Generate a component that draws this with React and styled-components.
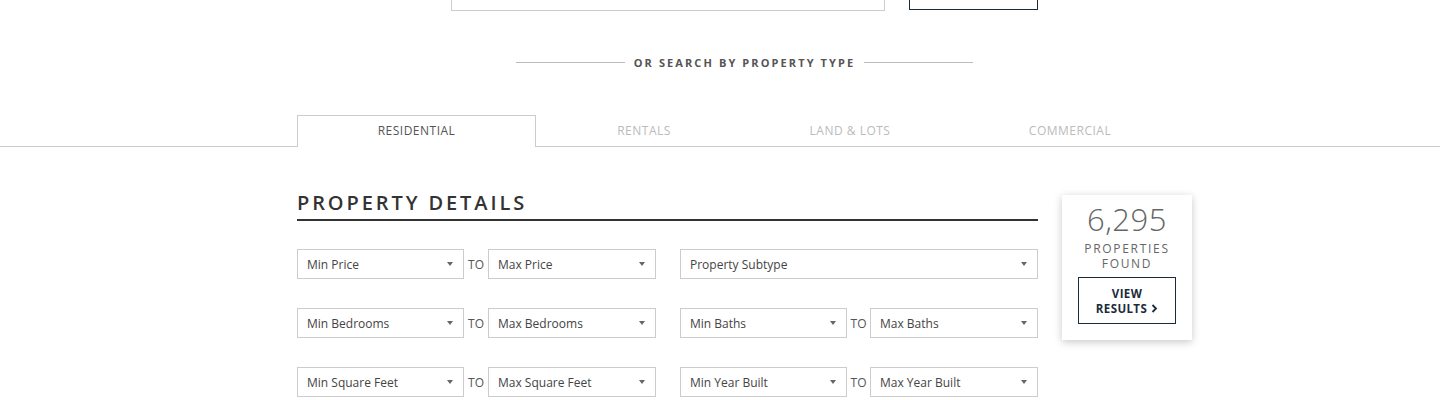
import React from 'react';
import styled, { createGlobalStyle } from 'styled-components';

const GlobalStyle = createGlobalStyle`
  body {
    margin: 0;
    background: #fff;
    font-family: "Open Sans", "Liberation Sans", sans-serif;
    overflow: hidden;
  }
`;

const NAVY = '#1c2b3a';

const Page = styled.div`
  width: 1440px;
  height: 400px;
  overflow: hidden;
`;

const Container = styled.div`
  width: 895px;
  margin-left: 297px;
`;

const SearchRow = styled(Container)`
  display: flex;
  justify-content: center;
  gap: 24px;
  margin-top: -30px;
`;

const SearchInput = styled.div`
  width: 434px;
  height: 41px;
  box-sizing: border-box;
  border: 1px solid #ccc;
  padding: 0 80px;
  font-size: 14px;
  color: #888;
  line-height: 34px;
`;

const SearchButton = styled.div`
  width: 129px;
  height: 40px;
  box-sizing: border-box;
  border: 1px solid ${NAVY};
  display: flex;
  justify-content: center;
  font-size: 12px;
  font-weight: 700;
  letter-spacing: 1px;
  color: ${NAVY};
  line-height: 28px;
`;

const OrDivider = styled(Container)`
  display: flex;
  align-items: center;
  justify-content: center;
  gap: 9px;
  height: 14px;
  margin-top: 44px;
  font-size: 11px;
  font-weight: 700;
  letter-spacing: 2.1px;
  color: #555;

  &::before,
  &::after {
    content: '';
    width: 109px;
    height: 1px;
    background: #bbb;
  }
`;

const TabBar = styled.div`
  display: flex;
  padding-left: 297px;
  margin-top: 46px;
  border-bottom: 1px solid #ccc;
`;

const Tab = styled.div`
  width: ${(p) => p.$w}px;
  height: 32px;
  box-sizing: border-box;
  margin-bottom: -1px;
  padding-bottom: 2px;
  display: flex;
  align-items: center;
  justify-content: center;
  border: 1px solid ${(p) => (p.$active ? '#ccc' : 'transparent')};
  border-bottom: 0;
  background: ${(p) => (p.$active ? '#fff' : 'transparent')};
  font-size: 12px;
  letter-spacing: 0.5px;
  color: ${(p) => (p.$active ? '#555' : '#bbb')};
`;

const Content = styled(Container)`
  display: flex;
  gap: 24px;
  margin-top: 44px;
`;

const Details = styled.div`
  width: 741px;
`;

const Title = styled.h2`
  margin: 0;
  font-size: 20px;
  font-weight: 600;
  letter-spacing: 2.9px;
  line-height: 24px;
  color: #333;
  padding-bottom: 4px;
  border-bottom: 2px solid #333;
`;

const FieldGrid = styled.div`
  display: grid;
  grid-template-columns: 359px 358px;
  column-gap: 24px;
  row-gap: 29px;
  margin-top: 28px;
`;

const Range = styled.div`
  display: grid;
  grid-template-columns: 167px 1fr 168px;
  align-items: center;
`;

const To = styled.span`
  font-size: 12px;
  color: #555;
  text-align: center;
`;

const SelectBox = styled.div`
  height: 30px;
  box-sizing: border-box;
  border: 1px solid #ccc;
  padding: 0 9px;
  display: flex;
  align-items: center;
  justify-content: space-between;
  font-size: 12px;
  color: #444;

  &::after {
    content: '';
    border-left: 3px solid transparent;
    border-right: 3px solid transparent;
    border-top: 4px solid #666;
    margin-right: 1px;
  }
`;

const Card = styled.div`
  width: 130px;
  height: 145px;
  margin-top: 4px;
  box-shadow: 0 2px 8px rgba(0, 0, 0, 0.22);
  display: flex;
  flex-direction: column;
  align-items: center;
  padding-top: 5px;
  box-sizing: border-box;
`;

const Count = styled.div`
  font-size: 31px;
  font-weight: 300;
  line-height: 38px;
  color: #666;
  letter-spacing: 0.5px;
`;

const Found = styled.div`
  font-size: 12px;
  line-height: 15px;
  letter-spacing: 1.7px;
  color: #666;
  text-align: center;
  margin-top: 3px;
`;

const ResultsButton = styled.div`
  width: 98px;
  height: 47px;
  box-sizing: border-box;
  margin-top: 6px;
  border: 1px solid ${NAVY};
  display: flex;
  flex-direction: column;
  align-items: center;
  justify-content: center;
  font-size: 11.5px;
  font-weight: 700;
  line-height: 15px;
  letter-spacing: 0.4px;
  color: ${NAVY};
`;

const Chevron = () => (
  <svg width="7" height="9" viewBox="0 0 7 9" style={{ marginLeft: 4 }}>
    <path d="M1.5 1 L5 4.5 L1.5 8" fill="none" stroke={NAVY} strokeWidth="1.8" />
  </svg>
);

const Select = ({ label }) => <SelectBox>{label}</SelectBox>;

const RangeField = ({ from, to }) => (
  <Range>
    <Select label={from} />
    <To>TO</To>
    <Select label={to} />
  </Range>
);

const tabs = [
  { label: 'RESIDENTIAL', w: 239, active: true },
  { label: 'RENTALS', w: 216 },
  { label: 'LAND & LOTS', w: 196 },
  { label: 'COMMERCIAL', w: 244 },
];

export default function App() {
  return (
    <Page>
      <GlobalStyle />
      <SearchRow>
        <SearchInput>Search by city, zip, address or MLS#</SearchInput>
        <SearchButton>
          SEARCH <Chevron />
        </SearchButton>
      </SearchRow>

      <OrDivider>OR SEARCH BY PROPERTY TYPE</OrDivider>

      <TabBar>
        {tabs.map((t) => (
          <Tab key={t.label} $w={t.w} $active={t.active}>
            {t.label}
          </Tab>
        ))}
      </TabBar>

      <Content>
        <Details>
          <Title>PROPERTY DETAILS</Title>
          <FieldGrid>
            <RangeField from="Min Price" to="Max Price" />
            <Select label="Property Subtype" />
            <RangeField from="Min Bedrooms" to="Max Bedrooms" />
            <RangeField from="Min Baths" to="Max Baths" />
            <RangeField from="Min Square Feet" to="Max Square Feet" />
            <RangeField from="Min Year Built" to="Max Year Built" />
          </FieldGrid>
        </Details>
        <Card>
          <Count>6,295</Count>
          <Found>
            PROPERTIES
            <br />
            FOUND
          </Found>
          <ResultsButton>
            <span>VIEW</span>
            <span>
              RESULTS
              <Chevron />
            </span>
          </ResultsButton>
        </Card>
      </Content>
    </Page>
  );
}
